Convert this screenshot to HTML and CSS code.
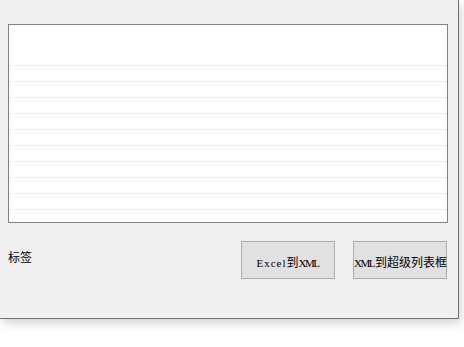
FILE: index.html
```html
<!DOCTYPE html>
<html>
<head>
<meta charset="utf-8">
<link rel="stylesheet" href="styles.css">
</head>
<body>
<div class="window">
  <div class="listbox">
    <div class="lines"></div>
  </div>
  <div class="bottom">
    <div class="label">标签</div>
    <button class="btn btn1"><span class="lat wide">Excel</span>到<span class="lat narrow">XML</span></button>
    <button class="btn btn2"><span class="lat narrow">XML</span>到超级列表框</button>
  </div>
</div>
</body>
</html>
```

FILE: styles.css
```css
html, body {
  margin: 0;
  padding: 0;
  background: #ffffff;
  width: 464px;
  height: 347px;
  overflow: hidden;
}
.window {
  box-sizing: border-box;
  width: 459px;
  height: 319px;
  background: #f0f0f0;
  border-right: 1px solid #707070;
  border-bottom: 1px solid #707070;
  box-shadow: 2px 4px 10px rgba(0, 0, 0, 0.18);
  padding: 24px 0 0 8px;
  font-family: "Noto Sans CJK SC", sans-serif;
  color: #000;
}
.listbox {
  box-sizing: border-box;
  width: 440px;
  height: 199px;
  border: 1px solid #828282;
  background: #ffffff;
  padding: 40px 0 0 0;
}
.lines {
  height: 157px;
  background:
    linear-gradient(to right, rgba(255,255,255,0.6) 0px, rgba(255,255,255,0.6) 6px, transparent 6px),
    repeating-linear-gradient(
      to bottom,
      #e8e8e8 0px, #e8e8e8 1px,
      #ffffff 1px, #ffffff 4px,
      #f6f6f6 4px, #f6f6f6 5px,
      #ffffff 5px, #ffffff 16px
    );
}
.bottom {
  display: flex;
  align-items: flex-start;
  margin-top: 18px;
}
.label {
  font-size: 12px;
  line-height: 14px;
  margin-top: 9px;
  width: 233px;
}
.btn {
  box-sizing: border-box;
  width: 94px;
  height: 38px;
  background: #e1e1e1;
  border: 1px solid #adadad;
  padding: 3px 0 0 0;
  font-family: "Noto Sans CJK SC", sans-serif;
  font-size: 12px;
  color: #000;
  white-space: nowrap;
  text-align: center;
}
.btn1 {
  margin-right: 18px;
}
.lat {
  font-family: "Liberation Serif", serif;
  font-size: 11px;
}
.wide {
  letter-spacing: 1px;
}
.narrow {
  letter-spacing: -1.5px;
  margin-right: 1px;
}
```
